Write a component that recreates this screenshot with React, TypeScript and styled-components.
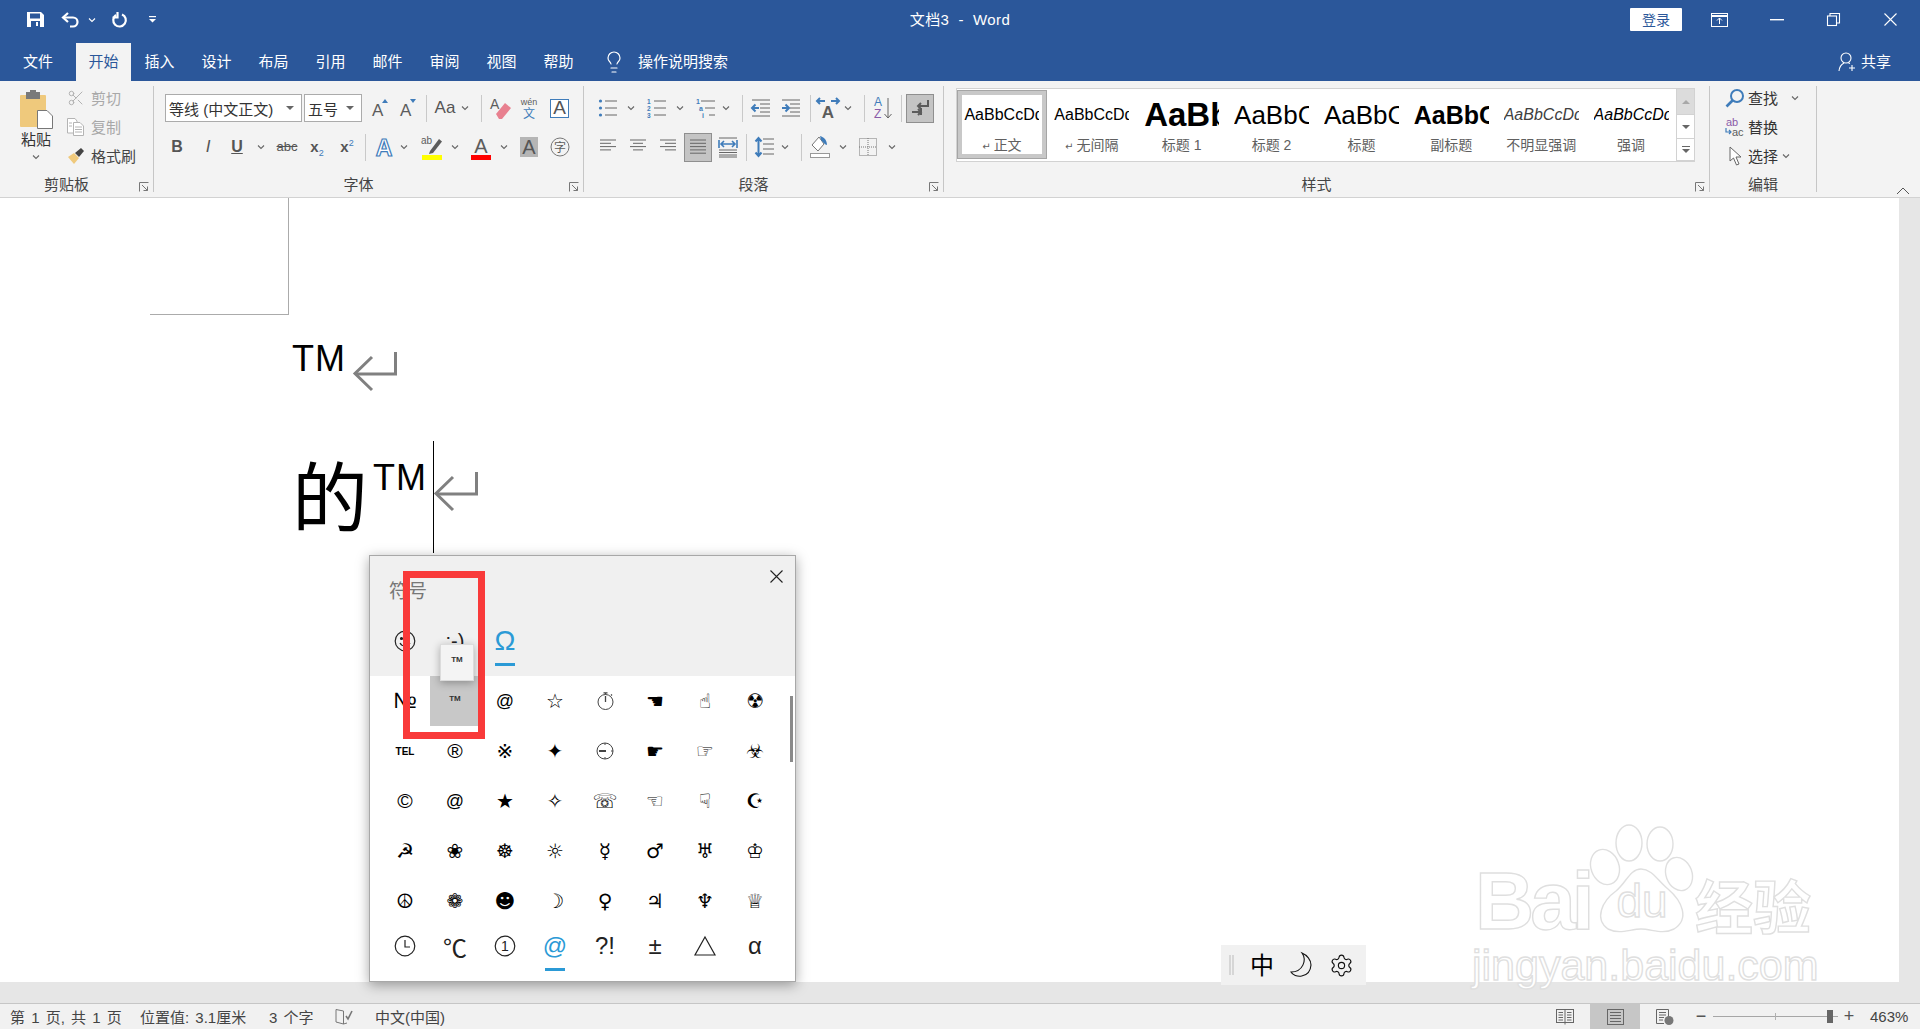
import React from 'react';
import styled, { createGlobalStyle } from 'styled-components';
import { Lightbulb, Scissors, Settings } from 'lucide-react';

const GlobalStyle = createGlobalStyle`
    html, body {
        margin: 0;
        padding: 0;
        overflow: hidden;
        background: #fff;
        font-family: "Liberation Sans", "Noto Sans CJK SC", sans-serif;
    }
    * { box-sizing: border-box; }
    svg { overflow: visible; }
`;

const GRAY = '#5c5c5c';
const BLUE = '#3f7cba';

const Chev = ({ color = '#666' }: { color?: string }) => (
    <svg width="8" height="6" viewBox="0 0 8 6"><path d="M1 1.5 L4 4.5 L7 1.5" fill="none" stroke={color} strokeWidth="1.1" /></svg>
);
const Launcher = () => (
    <svg width="10" height="10" viewBox="0 0 10 10" fill="none" stroke="#777" strokeWidth="1">
        <path d="M.5 9.5 V.5 H9.5" /><path d="M3 3 L8.5 8.5 M8.5 4.5 V8.5 H4.5" />
    </svg>
);
const SaveIcon = () => (
    <svg width="17" height="15" viewBox="0 0 17 15">
        <path d="M0 0 H14 L17 3 V15 H0 Z" fill="#fff" />
        <rect x="3" y="1.5" width="10" height="5" fill="#2b579a" />
        <rect x="4" y="9" width="9" height="6" fill="#2b579a" />
        <rect x="9" y="10" width="2" height="4" fill="#fff" />
    </svg>
);
const UndoIcon = () => (
    <svg width="19" height="16" viewBox="0 0 19 16" fill="none" stroke="#fff" strokeWidth="2.2">
        <path d="M7 1 L2 5.5 L7 10" /><path d="M2 5.5 H12 a4.5 4.5 0 0 1 0 9 H9" />
    </svg>
);
const RedoIcon = () => (
    <svg width="17" height="16" viewBox="0 0 17 16" fill="none" stroke="#fff" strokeWidth="2.2">
        <path d="M6 3 A6.3 6.3 0 1 0 12 2.4" /><path d="M7.5 0 V5.5 H2.5" />
    </svg>
);
const QatMore = () => (
    <svg width="7" height="7" viewBox="0 0 7 7" fill="#fff"><rect y="0" width="7" height="1.2" /><path d="M0 3 H7 L3.5 6.5 Z" /></svg>
);
const RibbonDisplay = () => (
    <svg width="17" height="14" viewBox="0 0 17 14" fill="none" stroke="#fff"><rect x=".5" y=".5" width="16" height="13" /><path d="M.5 3 H16.5" strokeWidth="2" /><path d="M8.5 11 V5 M6 7.5 L8.5 5 L11 7.5" /></svg>
);
const MinIcon = () => <svg width="14" height="2" viewBox="0 0 14 2"><rect width="14" height="1.4" fill="#fff" /></svg>;
const RestoreIcon = () => (
    <svg width="13" height="13" viewBox="0 0 13 13" fill="none" stroke="#fff" strokeWidth="1.1"><rect x=".5" y="3" width="9" height="9.5" /><path d="M3 3 V.5 H12.5 V10 H9.5" /></svg>
);
const CloseIcon = ({ color = '#fff', size = 13 }: { color?: string; size?: number }) => (
    <svg width={size} height={size} viewBox="0 0 13 13" stroke={color} strokeWidth="1.1"><path d="M.5 .5 L12.5 12.5 M12.5 .5 L.5 12.5" /></svg>
);
const UserPlus = () => (
    <svg width="18" height="20" viewBox="0 0 18 20" fill="none" stroke="#fff" strokeWidth="1.1"><circle cx="8" cy="6" r="5" /><path d="M1 19 C1.5 14 4 12 6 11 M10.5 11 L12 11.6" /><path d="M14 13 V19 M11 16 H17" /></svg>
);
const PasteIcon = () => (
    <svg width="35" height="39" viewBox="0 0 35 39">
        <rect x="1" y="5" width="26" height="32" rx="1" fill="#efc97c" />
        <rect x="7" y="2" width="14" height="7" fill="#7a7a7a" />
        <rect x="11" y="0" width="6" height="4" fill="#7a7a7a" />
        <path d="M18.5 20.5 H28 L33.5 26 V38.5 H18.5 Z" fill="#fff" stroke="#777" />
    </svg>
);
const CopyIcon = () => (
    <svg width="17" height="18" viewBox="0 0 17 18" fill="#fff" stroke="#b4b4b4"><path d="M.5 .5 H8 L10 3 V15 H.5 Z" /><path d="M6.5 4.5 H13 L16.5 8 V17.5 H6.5 Z" /><path d="M8 9 H15 M8 11.5 H15 M8 14 H15 M2 5 H5 M2 8 H5" /></svg>
);
const BrushIcon = () => (
    <svg width="18" height="18" viewBox="0 0 18 18"><path d="M1 10 L7 6 L12 11 L7 17 C5 15 3 12 1 10 Z" fill="#efc97c" /><path d="M8 6 L14 1 L17 4 L12 10 Z" fill="#444" /></svg>
);
const SizeA = ({ up }: { up: boolean }) => (
    <svg width="20" height="20" viewBox="0 0 20 20">
        <text x="2" y="18" fontFamily="Liberation Sans" fontSize="17" fill={GRAY}>A</text>
        <path d={up ? 'M12 5 L15 1 L18 5 Z' : 'M12 1 H18 L15 5 Z'} fill={BLUE} />
    </svg>
);
const EraserIcon = () => (
    <svg width="22" height="24" viewBox="0 0 22 24">
        <text x="0" y="13" fontFamily="Liberation Sans" fontSize="14" fill={GRAY}>A</text>
        <path d="M6 18 L15 7 L21 12 L12 23 H9 Z" fill="#e8808f" />
    </svg>
);
const WenIcon = () => (
    <svg width="22" height="24" viewBox="0 0 22 24">
        <text x="11" y="9" textAnchor="middle" fontFamily="Liberation Sans" fontSize="9" fill={GRAY}>wén</text>
        <text x="11" y="22" textAnchor="middle" fontFamily="Noto Sans CJK SC" fontSize="12" fill={BLUE}>文</text>
    </svg>
);
const EffectA = () => (
    <svg width="20" height="22" viewBox="0 0 20 22">
        <text x="10" y="20" textAnchor="middle" fontFamily="Liberation Sans" fontWeight="700" fontSize="23" fill="#fff" stroke={BLUE} strokeWidth="1.2">A</text>
    </svg>
);
const HighlightIcon = () => (
    <svg width="22" height="25" viewBox="0 0 22 25">
        <text x="0" y="9" fontFamily="Liberation Sans" fontSize="10" fill={GRAY}>ab</text>
        <path d="M9 16 L18 4 L21 6.5 L12 18 L8 19 Z" fill={GRAY} />
        <rect x="1" y="20" width="20" height="5" fill="#ffff00" />
    </svg>
);
const RedA = () => (
    <svg width="20" height="25" viewBox="0 0 20 25">
        <text x="10" y="18" textAnchor="middle" fontFamily="Liberation Sans" fontSize="20" fill={GRAY}>A</text>
        <rect x="0" y="20" width="20" height="5" fill="#f00" />
    </svg>
);
const PhoneticCircle = () => (
    <svg width="20" height="20" viewBox="0 0 20 20">
        <circle cx="10" cy="10" r="9" fill="none" stroke="#777" />
        <text x="10" y="14.5" textAnchor="middle" fontFamily="Noto Sans CJK SC" fontSize="12" fill={GRAY}>字</text>
    </svg>
);
const Lines = ({ rows }: { rows: [number, number][] }) => (
    <svg width="20" height="18" viewBox="0 0 20 18" stroke="#666">
        {rows.map(([a, b], i) => <path key={i} d={`M${a} ${2 + i * 3.3} H${b}`} />)}
    </svg>
);
const BulletList = ({ kind }: { kind: 'dot' | 'num' | 'multi' }) => (
    <svg width="20" height="20" viewBox="0 0 20 20">
        {kind === 'dot' && [3, 10, 17].map((y) => <circle key={y} cx="2.5" cy={y} r="1.6" fill={BLUE} />)}
        {kind === 'num' && ['1', '2', '3'].map((t, i) => <text key={t} x="0" y={5.5 + i * 7} fontSize="6.5" fontWeight="700" fontFamily="Liberation Sans" fill={BLUE}>{t}</text>)}
        {kind === 'multi' && ['1', 'a', 'i'].map((t, i) => <text key={t} x={i * 3} y={5.5 + i * 7} fontSize="7" fontWeight="700" fontFamily="Liberation Sans" fill={BLUE}>{t}</text>)}
        {[3, 10, 17].map((y, i) => <path key={y} d={`M${kind === 'multi' ? 5 + i * 4 : 7} ${y} H19`} stroke="#666" />)}
    </svg>
);
const IndentIcon = ({ dir }: { dir: 'in' | 'out' }) => (
    <svg width="20" height="20" viewBox="0 0 20 20" stroke="#666">
        {[2, 6, 10, 14, 18].map((y) => <path key={y} d={`M${y === 2 || y === 18 ? 1 : 9} ${y} H19`} />)}
        <path d={dir === 'out' ? 'M8 10 H1 M4.5 6.5 L1 10 L4.5 13.5' : 'M1 10 H8 M4.5 6.5 L8 10 L4.5 13.5'} stroke={BLUE} strokeWidth="2" fill="none" />
    </svg>
);
const TongueIcon = () => (
    <svg width="24" height="22" viewBox="0 0 24 22">
        <text x="12" y="21" textAnchor="middle" fontFamily="Liberation Sans" fontWeight="700" fontSize="17" fill={GRAY}>A</text>
        <path d="M1 4 H9 M4 1 L1 4 L4 7 M23 4 H15 M20 1 L23 4 L20 7" fill="none" stroke={BLUE} strokeWidth="2" />
    </svg>
);
const SortIcon = () => (
    <svg width="20" height="24" viewBox="0 0 20 24">
        <text x="0" y="10" fontFamily="Liberation Sans" fontSize="12" fill={BLUE}>A</text>
        <text x="0" y="22" fontFamily="Liberation Sans" fontSize="12" fill="#8a5aa8">Z</text>
        <path d="M14 2 V22 M10.5 18 L14 22 L17.5 18" fill="none" stroke="#666" />
    </svg>
);
const PilcrowIcon = () => (
    <svg width="20" height="20" viewBox="0 0 20 20" fill="none" strokeWidth="2">
        <path d="M18 2 V8 H8 M11 5 L8 8 L11 11" stroke={GRAY} />
        <path d="M2 14 H11 M8 11 L11 14 L8 17 M11 10 V17" stroke={GRAY} />
    </svg>
);
const DistributedIcon = () => (
    <svg width="20" height="22" viewBox="0 0 20 22" stroke="#666">
        {[2, 14, 16.5, 19, 21].map((y) => <path key={y} d={`M1 ${y} H19`} />)}
        <path d="M3 8 H17 M6 5 L3 8 L6 11 M14 5 L17 8 L14 11 M1 4 V12 M19 4 V12" fill="none" stroke={BLUE} strokeWidth="1.6" />
    </svg>
);
const LineSpacingIcon = () => (
    <svg width="20" height="22" viewBox="0 0 20 22">
        {[3, 8, 13, 18].map((y) => <path key={y} d={`M8 ${y} H19`} stroke="#666" />)}
        <path d="M3.5 2 V20 M.5 5.5 L3.5 2 L6.5 5.5 M.5 16.5 L3.5 20 L6.5 16.5" fill="none" stroke={BLUE} strokeWidth="2" />
    </svg>
);
const FillIcon = () => (
    <svg width="20" height="24" viewBox="0 0 20 24">
        <path d="M9 2 L2 10 L8 16 L14 9 Z" fill="#fff" stroke="#777" />
        <path d="M10 1 C14 2 17 5 17 10 C15 10 13 7 11 5 Z" fill={BLUE} />
        <rect x=".5" y="18.5" width="19" height="4" fill="#fff" stroke="#999" />
    </svg>
);
const BorderIcon = () => (
    <svg width="18" height="18" viewBox="0 0 18 18" fill="none" stroke="#777" strokeDasharray="1 1"><rect x=".5" y=".5" width="17" height="17" /><path d="M9 0 V18 M0 9 H18" /></svg>
);
const SearchIcon = () => (
    <svg width="20" height="20" viewBox="0 0 20 20" fill="none" stroke={BLUE} strokeWidth="2"><circle cx="12" cy="8" r="6" /><path d="M7.5 12.5 L1.5 18.5" strokeWidth="2.6" /></svg>
);
const ReplaceIcon = () => (
    <svg width="22" height="20" viewBox="0 0 22 20">
        <text x="2" y="9" fontFamily="Liberation Sans" fontSize="11" fill="#8a5aa8">ab</text>
        <text x="8" y="19" fontFamily="Liberation Sans" fontSize="11" fill={GRAY}>ac</text>
        <path d="M2 11 V15 H7 M5 13 L7 15 L5 17" fill="none" stroke={BLUE} strokeWidth="1.2" />
    </svg>
);
const CursorIcon = () => (
    <svg width="13" height="20" viewBox="0 0 13 20"><path d="M1 1 V15 L4.5 12 L7.5 19 L10 18 L7 11 L12 11 Z" fill="#fff" stroke="#666" /></svg>
);
const CheckBook = () => (
    <svg width="18" height="16" viewBox="0 0 18 16" fill="none" stroke="#777"><path d="M8.5 2 L1 .5 V13 L8.5 15 M8.5 2 V15 M8.5 15 L12 14" /><path d="M11 7 L13 10 L17 2" strokeWidth="1.6" /></svg>
);
const ReadIcon = () => (
    <svg width="18" height="16" viewBox="0 0 18 16" fill="none" stroke="#666"><rect x=".5" y=".5" width="17" height="13" /><path d="M9 .5 V15.5 M2.5 3.5 H7 M2.5 6 H7 M2.5 8.5 H7 M2.5 11 H7 M11 3.5 H15.5 M11 6 H15.5 M11 8.5 H15.5 M11 11 H15.5" /></svg>
);
const PrintIcon = () => (
    <svg width="17" height="16" viewBox="0 0 17 16" fill="none" stroke="#666"><rect x=".5" y=".5" width="16" height="15" /><path d="M3 3.5 H14 M3 6.5 H14 M3 9.5 H14 M3 12.5 H14" /></svg>
);
const WebIcon = () => (
    <svg width="18" height="16" viewBox="0 0 18 16"><path d="M.5 .5 H12.5 V8 M.5 .5 V14.5 H8" fill="none" stroke="#666" /><path d="M3 3.5 H10 M3 6 H10 M3 8.5 H8 M3 11 H7" stroke="#666" /><circle cx="13" cy="11.5" r="4.5" fill="#777" /></svg>
);
const Grip = () => (
    <svg width="6" height="20" viewBox="0 0 6 20" stroke="#bbb"><path d="M1 0 V20 M4 0 V20" /></svg>
);
const MoonIcon = () => (
    <svg width="24" height="26" viewBox="0 0 24 26"><path d="M13 1 C18 8 14 20 2 20 C5 26 21 27 22 13 C22 8 18 3 13 1 Z" fill="none" stroke="#111" strokeWidth="1.1" /></svg>
);
const ReturnMark = () => (
    <svg width="44" height="39" viewBox="0 0 44 39" fill="none" stroke="#808080" strokeWidth="3">
        <path d="M42.5 0 V22 H3" /><path d="M19 5 L2 21.5 L19 38" />
    </svg>
);
const FaceTab = () => (
    <svg width="22" height="22" viewBox="0 0 22 22" fill="none" stroke="#222" strokeWidth="1.2">
        <circle cx="11" cy="11" r="9.8" /><circle cx="7.5" cy="8.5" r="1" fill="#222" /><circle cx="14.5" cy="8.5" r="1" fill="#222" /><path d="M6 13 C8 17 14 17 16 13" />
    </svg>
);
const ClockIcon = () => (
    <svg width="22" height="22" viewBox="0 0 22 22" fill="none" stroke="#222" strokeWidth="1.2"><circle cx="11" cy="11" r="9.8" /><path d="M11 5 V12 H16" /></svg>
);
const OneIcon = () => (
    <svg width="22" height="22" viewBox="0 0 22 22"><circle cx="11" cy="11" r="9.8" fill="none" stroke="#222" strokeWidth="1.2" /><text x="11" y="16" textAnchor="middle" fontSize="14" fontFamily="Liberation Sans" fill="#222">1</text></svg>
);
const TriangleIcon = () => (
    <svg width="22" height="20" viewBox="0 0 22 20" fill="none" stroke="#222" strokeWidth="1.2"><path d="M11 1 L21 19 H1 Z" /></svg>
);
const StopwatchIcon = () => (
    <svg width="17" height="18" viewBox="0 0 17 18" fill="none" stroke="#444"><circle cx="8.5" cy="10" r="7.5" /><path d="M8.5 10 V4 M6.5 .8 H10.5 M8.5 .8 V2.5 M14 2.5 L15 3.5" strokeWidth="1.3" /></svg>
);
const TimerIcon = () => (
    <svg width="18" height="18" viewBox="0 0 18 18" fill="none" stroke="#444"><circle cx="9" cy="9" r="8" /><path d="M3 9 H10" strokeWidth="2" /><path d="M9 1 V3 M9 15 V17 M15 9 H17" /></svg>
);

const Window = styled.div`
    position: relative;
    width: 1920px;
    height: 1029px;
    display: flex;
    flex-direction: column;
    overflow: hidden;
    color: #444;
`;
const TitleBar = styled.div`
    height: 43px;
    padding-bottom: 4px;
    background: #2b579a;
    display: grid;
    grid-template-columns: 1fr auto 1fr;
    align-items: center;
    color: #fff;
`;
const Qat = styled.div`
    display: flex;
    align-items: center;
`;
const WinTitle = styled.div`
    padding-bottom: 3px;
    font-size: 15px;
    letter-spacing: 0.4px;
    white-space: pre;
`;
const WinControls = styled.div`
    display: flex;
    align-items: center;
    justify-content: flex-end;
    padding-right: 1px;
`;
const LoginButton = styled.div`
    width: 52px;
    height: 23px;
    padding-bottom: 2px;
    margin-right: 9px;
    background: #fff;
    border-radius: 1px;
    color: #2b579a;
    font-size: 14px;
    display: flex;
    align-items: center;
    justify-content: center;
`;
const WinButton = styled.div`
    width: 57px;
    display: flex;
    justify-content: center;
    align-items: center;
`;
const TabBar = styled.div`
    height: 38px;
    background: #2b579a;
    display: flex;
    align-items: stretch;
    color: #fff;
    font-size: 15px;
`;
const Tab = styled.div<{ $w?: number; $active?: boolean }>`
    width: ${(p) => p.$w ?? 57}px;
    padding-bottom: 3px;
    display: flex;
    align-items: center;
    justify-content: center;
    background: ${(p) => (p.$active ? '#f3f3f3' : 'transparent')};
    color: ${(p) => (p.$active ? '#2b579a' : '#fff')};
`;
const TellMe = styled.div`
    margin-left: 5px;
    display: flex;
    align-items: center;
    gap: 2px;
`;
const TellText = styled.span`
    padding-bottom: 3px;
`;
const BulbSlot = styled.span`
    width: 44px;
    display: flex;
    justify-content: center;
`;
const Share = styled.div`
    margin-left: auto;
    padding-right: 29px;
    display: flex;
    align-items: center;
    gap: 5px;
`;
const Ribbon = styled.div`
    height: 117px;
    padding-top: 5px;
    background: #f3f3f3;
    border-bottom: 1px solid #d2d2d2;
    display: flex;
    align-items: flex-start;
    font-size: 15px;
`;
const Group = styled.div<{ $w: number }>`
    position: relative;
    width: ${(p) => p.$w}px;
    height: 106px;
    border-right: 1px solid #c6c6c6;
    display: flex;
    flex-direction: column;
`;
const GroupBody = styled.div`
    flex: 1;
    min-height: 0;
`;
const GroupLabel = styled.div<{ $plain?: boolean }>`
    height: 14px;
    padding-right: ${(p) => (p.$plain ? 0 : 20)}px;
    line-height: 14px;
    font-size: 15px;
    text-align: center;
    color: #444;
`;
const LauncherSpot = styled.span`
    position: absolute;
    right: 4px;
    bottom: 0;
    display: flex;
`;
const ClipBody = styled(GroupBody)`
    display: flex;
`;
const PasteColumn = styled.div`
    width: 67px;
    padding: 4px 0 0 5px;
    display: flex;
    flex-direction: column;
    align-items: center;
    color: #333;
`;
const PasteText = styled.div`
    margin-top: 1px;
    line-height: 20px;
`;
const PasteChev = styled.div`
    margin-top: 4px;
    line-height: 0;
`;
const ActionList = styled.div`
    margin-top: -2px;
    display: flex;
    flex-direction: column;
    gap: 2px;
`;
const Action = styled.div<{ $off?: boolean }>`
    height: 27px;
    display: flex;
    align-items: center;
    color: ${(p) => (p.$off ? '#a8a8a8' : '#444')};
`;
const ActionIcon = styled.span`
    width: 24px;
    display: flex;
`;
const ToolRows = styled(GroupBody)`
    padding-top: 8px;
    display: flex;
    flex-direction: column;
    gap: 11px;
`;
const ToolRow = styled.div`
    height: 28px;
    display: flex;
    align-items: center;
`;
const Slot = styled.span<{ $w?: number; $ml?: number }>`
    flex: none;
    width: ${(p) => p.$w ?? 20}px;
    margin-left: ${(p) => p.$ml ?? 0}px;
    display: flex;
    justify-content: center;
    align-items: center;
    color: #555;
`;
const Glyph = styled.span<{ $size?: number; $bold?: boolean; $italic?: boolean; $strike?: boolean; $u?: boolean }>`
    font-family: "Liberation Sans", sans-serif;
    font-size: ${(p) => p.$size ?? 16}px;
    font-weight: ${(p) => (p.$bold ? 700 : 400)};
    font-style: ${(p) => (p.$italic ? 'italic' : 'normal')};
    text-decoration: ${(p) => (p.$strike ? 'line-through' : p.$u ? 'underline' : 'none')};
    line-height: 20px;
    white-space: nowrap;
`;
const SubMark = styled.sub`
    font-size: 9px;
    color: ${BLUE};
    font-weight: 400;
    line-height: 0;
`;
const SupMark = styled.sup`
    font-size: 9px;
    color: ${BLUE};
    font-weight: 400;
    line-height: 0;
`;
const VSep = styled.span<{ $ml: number }>`
    flex: none;
    width: 1px;
    height: 27px;
    margin-left: ${(p) => p.$ml}px;
    background: #c9c9c9;
`;
const Select = styled.div<{ $w: number; $ml?: number }>`
    flex: none;
    width: ${(p) => p.$w}px;
    height: 28px;
    margin-left: ${(p) => p.$ml ?? 0}px;
    padding: 0 2px 0 3px;
    background: #fff;
    border: 1px solid #ababab;
    display: flex;
    align-items: center;
    justify-content: space-between;
    color: #333;
    font-size: 15px;
    white-space: nowrap;
`;
const SelectArrow = styled.span`
    width: 0;
    height: 0;
    margin-right: 5px;
    border-left: 4px solid transparent;
    border-right: 4px solid transparent;
    border-top: 4px solid #666;
`;
const BoxedA = styled.span`
    width: 19px;
    height: 19px;
    background: #fff;
    border: 1px solid #3f7cba;
    display: flex;
    align-items: center;
    justify-content: center;
    font-size: 19px;
    color: #555;
    font-family: "Liberation Sans", sans-serif;
`;
const ShadeA = styled(BoxedA)`
    height: 20px;
    width: 18px;
    background: #b5b5b5;
    border: none;
    font-size: 20px;
`;
const Toggled = styled.span`
    flex: none;
    width: 28px;
    height: 29px;
    background: #c4c4c4;
    border: 1px solid #8f8f8f;
    display: flex;
    align-items: center;
    justify-content: center;
`;
const ToggledAt = styled(Toggled)<{ $ml: number }>`
    margin-left: ${(p) => p.$ml}px;
`;
const Gallery = styled.div`
    width: 739px;
    height: 74px;
    margin: 2px 0 0 12px;
    background: #fff;
    border: 1px solid #d2d2d2;
    display: flex;
`;
const StyleItem = styled.div<{ $active?: boolean }>`
    width: 90px;
    height: 69px;
    margin-top: 1px;
    box-shadow: ${(p) => (p.$active ? 'inset 0 0 0 1px #a5a5a5, inset 0 0 0 5px #c8c8c8' : 'none')};
    display: flex;
    flex-direction: column;
    align-items: center;
`;
const StylePreview = styled.div<{ $size?: number; $bold?: boolean; $italic?: boolean; $color?: string }>`
    width: 75px;
    height: 50px;
    overflow: hidden;
    white-space: nowrap;
    font-family: "Liberation Sans", sans-serif;
    font-size: ${(p) => p.$size ?? 16}px;
    font-weight: ${(p) => (p.$bold ? 700 : 400)};
    font-style: ${(p) => (p.$italic ? 'italic' : 'normal')};
    color: ${(p) => p.$color ?? '#000'};
    line-height: 50px;
`;
const StyleName = styled.div`
    margin-top: -4px;
    line-height: 18px;
    font-size: 14px;
    color: #606060;
    white-space: nowrap;
`;
const ReturnGlyph = styled.span`
    font-size: 10px;
    margin-right: 3px;
    font-family: "DejaVu Sans", sans-serif;
`;
const GalleryScroll = styled.div`
    margin-left: auto;
    width: 18px;
    display: flex;
    flex-direction: column;
    border-left: 1px solid #d2d2d2;
`;
const ScrollBtn = styled.div<{ $h: number; $off?: boolean }>`
    height: ${(p) => p.$h}px;
    background: ${(p) => (p.$off ? '#dcdcdc' : '#fff')};
    border-bottom: 1px solid #d2d2d2;
    display: flex;
    flex-direction: column;
    gap: 2px;
    align-items: center;
    justify-content: center;
`;
const Tri = styled.span<{ $up?: boolean; $c?: string }>`
    width: 0;
    height: 0;
    border-left: 4px solid transparent;
    border-right: 4px solid transparent;
    ${(p) => (p.$up ? `border-bottom: 4px solid ${p.$c ?? '#666'};` : `border-top: 4px solid ${p.$c ?? '#666'};`)}
`;
const TriBar = styled.span`
    width: 8px;
    height: 1px;
    background: #666;
`;
const EditBody = styled(GroupBody)`
    margin-top: -2px;
    display: flex;
    flex-direction: column;
    gap: 2px;
    padding-left: 14px;
`;
const EditRow = styled.div`
    height: 27px;
    display: flex;
    align-items: center;
    color: #333;
`;
const EditIcon = styled.span`
    width: 24px;
    padding-right: 2px;
    display: flex;
    justify-content: center;
`;
const EditChev = styled.span<{ $ml: number }>`
    margin-left: ${(p) => p.$ml}px;
    display: flex;
`;
const Collapse = styled.span`
    flex: none;
    margin: 101px 0 0 79px;
    line-height: 0;
`;
const DocArea = styled.div`
    height: 784px;
    display: flex;
`;
const Page = styled.div`
    flex: 1;
    background: #fff;
    font-family: "Liberation Sans", sans-serif;
    color: #000;
`;
const Strip = styled.div`
    width: 21px;
    background: #e6e6e6;
`;
const CropMark = styled.div`
    width: 139px;
    height: 117px;
    margin-left: 150px;
    border-right: 1px solid #ababab;
    border-bottom: 1px solid #ababab;
`;
const Para = styled.div<{ $mt: number }>`
    margin: ${(p) => p.$mt}px 0 0 292px;
    display: flex;
    align-items: flex-start;
`;
const Trade = styled.span<{ $mt?: number; $ml?: number }>`
    font-size: 36px;
    line-height: 36px;
    letter-spacing: 1px;
    margin: ${(p) => p.$mt ?? 0}px 0 0 ${(p) => p.$ml ?? 0}px;
`;
const BigChar = styled.span`
    width: 76px;
    height: 76px;
    font-size: 76px;
    line-height: 76px;
    margin-top: -1px;
    font-family: "Noto Sans CJK SC", sans-serif;
`;
const MarkSpot = styled.span<{ $mt: number; $ml?: number }>`
    display: flex;
    margin: ${(p) => p.$mt}px 0 0 ${(p) => p.$ml ?? 0}px;
`;
const Caret = styled.span`
    flex: none;
    width: 1px;
    height: 112px;
    margin: -15px 0 0 6px;
    background: #000;
`;
const Gutter = styled.div`
    height: 21px;
    background: #e6e6e6;
`;
const StatusBar = styled.div`
    height: 26px;
    background: #f1f1f1;
    border-top: 1px solid #c6c6c6;
    padding-left: 10px;
    display: flex;
    align-items: stretch;
    font-size: 15px;
    word-spacing: 2px;
    color: #444;
`;
const StatusItem = styled.div<{ $w: number }>`
    width: ${(p) => p.$w}px;
    display: flex;
    align-items: center;
    white-space: nowrap;
`;
const StatusRight = styled.div`
    margin-left: auto;
    padding-right: 11px;
    display: flex;
    align-items: stretch;
`;
const ViewBtn = styled.div<{ $active?: boolean }>`
    width: 50px;
    background: ${(p) => (p.$active ? '#c6c6c6' : 'transparent')};
    display: flex;
    align-items: center;
    justify-content: center;
`;
const ZoomSign = styled.div`
    width: 22px;
    display: flex;
    align-items: center;
    justify-content: center;
    font-size: 18px;
    color: #555;
`;
const Slider = styled.div`
    position: relative;
    width: 125px;
    margin-left: 1px;
    display: flex;
    align-items: center;
`;
const SliderTrack = styled.div`
    width: 100%;
    height: 1px;
    background: #a6a6a6;
`;
const SliderTick = styled.div`
    position: absolute;
    left: 62px;
    top: 9px;
    width: 1px;
    height: 7px;
    background: #b0b0b0;
`;
const SliderThumb = styled.div`
    position: absolute;
    left: 114px;
    top: 6px;
    width: 6px;
    height: 13px;
    background: #666;
`;
const ZoomPct = styled.div`
    width: 39px;
    margin-left: 10px;
    display: flex;
    align-items: center;
    white-space: nowrap;
`;
const Popup = styled.div`
    position: absolute;
    left: 369px;
    top: 555px;
    width: 427px;
    height: 427px;
    background: #fff;
    border: 1px solid #a8a8a8;
    box-shadow: 0 3px 12px rgba(0, 0, 0, 0.35);
    font-family: "Liberation Sans", "Noto Sans CJK SC", sans-serif;
    color: #111;
`;
const PopupHead = styled.div`
    height: 120px;
    background: #f0f0f0;
`;
const PopupTitleRow = styled.div`
    padding: 14px 12px 0 19px;
    display: flex;
    justify-content: space-between;
    align-items: flex-start;
`;
const PopupTitle = styled.div`
    margin-top: 10px;
    font-size: 19px;
    line-height: 24px;
    color: #777;
`;
const PanelTabs = styled.div`
    margin-top: 19px;
    padding-left: 10px;
    display: flex;
`;
const PanelTab = styled.div<{ $active?: boolean }>`
    width: 50px;
    display: flex;
    flex-direction: column;
    align-items: center;
    color: ${(p) => (p.$active ? '#2b9ad6' : '#222')};
    &::after {
        content: '';
        width: 20px;
        height: 3px;
        margin-top: 4px;
        background: ${(p) => (p.$active ? '#2b9ad6' : 'transparent')};
    }
`;
const PanelGlyph = styled.div<{ $size?: number }>`
    height: 36px;
    display: flex;
    align-items: center;
    justify-content: center;
    font-size: ${(p) => p.$size ?? 24}px;
    font-weight: 400;
    white-space: nowrap;
`;
const SymbolGrid = styled.div`
    padding-left: 10px;
    display: grid;
    grid-template-columns: repeat(8, 50px);
    grid-auto-rows: 50px;
`;
const SymbolCell = styled.div<{ $size?: number; $hl?: boolean; $thin?: boolean; $bold?: boolean }>`
    display: flex;
    align-items: center;
    justify-content: center;
    font-family: ${(p) => (p.$thin ? '"Liberation Sans"' : '"DejaVu Sans"')}, "Noto Sans CJK SC", sans-serif;
    font-size: ${(p) => p.$size ?? 20}px;
    font-weight: ${(p) => (p.$bold ? 700 : 400)};
    color: #000;
    ${(p) => (p.$hl ? 'padding-bottom: 6px; background: #c8c8c8;' : '')}
`;
const BottomTabs = styled(PanelTabs)`
    margin-top: 2px;
`;
const ListScroll = styled.div`
    position: absolute;
    left: 420px;
    top: 140px;
    width: 3px;
    height: 66px;
    background: #8a8a8a;
`;
const RedFrame = styled.div`
    position: absolute;
    left: 33px;
    top: 15px;
    width: 82px;
    height: 168px;
    border: 7px solid #f93a3a;
`;
const KeyTip = styled.div`
    position: absolute;
    left: 70px;
    top: 88px;
    width: 34px;
    height: 37px;
    background: #f4f4f4;
    border: 1px solid #dcdcdc;
    box-shadow: 0 2px 8px rgba(0, 0, 0, 0.3);
    display: flex;
    justify-content: center;
    align-items: center;
    padding-bottom: 7px;
`;
const TinyTm = styled.span`
    font-family: "Liberation Sans", sans-serif;
    font-size: 8px;
    font-weight: 700;
    color: #333;
`;
const ImeBar = styled.div`
    position: absolute;
    left: 1221px;
    top: 945px;
    width: 145px;
    height: 40px;
    padding-left: 8px;
    background: #f1f1f1;
    display: flex;
    align-items: center;
    color: #000;
`;
const ImeChar = styled.span`
    width: 38px;
    margin-left: 8px;
    padding-bottom: 3px;
    text-align: center;
    font-size: 24px;
`;
const ImeIcon = styled.span`
    width: 40px;
    display: flex;
    justify-content: center;
`;
const Watermark = styled.div`
    position: absolute;
    left: 1472px;
    top: 823px;
    pointer-events: none;
`;
const MarkRow = styled.div`
    height: 112px;
    display: flex;
    align-items: flex-end;
`;
const outline = `
    color: #fff;
    -webkit-text-stroke: 1.4px #dfdfdf;
    white-space: nowrap;
`;
const MarkBai = styled.span`
    ${outline}
    margin-left: 3px;
    font-family: "Liberation Sans", sans-serif;
    font-weight: 700;
    font-size: 82px;
    letter-spacing: -4px;
    line-height: 82px;
    width: 115px;
    margin-bottom: -7px;
`;
const MarkCn = styled.span`
    ${outline}
    font-family: "Noto Sans CJK SC", sans-serif;
    font-weight: 700;
    font-size: 58px;
    line-height: 62px;
`;
const MarkUrl = styled.div`
    ${outline}
    margin-top: 5px;
    font-family: "Liberation Sans", sans-serif;
    font-size: 43px;
    line-height: 50px;
`;

const symbols: React.ReactNode[] = [
    '№', '', '@', '☆', <StopwatchIcon key="sw" />, '☚', '☝', '☢',
    'TEL', '®', '※', '✦', <TimerIcon key="tm" />, '☛', '☞', '☣',
    '©', '@', '★', '✧', '☏', '☜', '☟', '☪',
    '☭', '❀', '☸', '☼', '☿', '♂', '♅', '♔',
    '☮', '❁', '☻', '☽', '♀', '♃', '♆', '♕',
];

const thinSet: React.ReactNode[] = ['№', 'TEL', '®', '©', '@'];

const sizeFor = (s: React.ReactNode) => {
    if (s === '№') return 22;
    if (s === 'TEL') return 10;
    if (s === '®' || s === '©') return 21;
    if (s === '@') return 18;
    return 20;
};

const App = () => {
    return (
        <Window>
            <GlobalStyle />
            <TitleBar>
                <Qat>
                    <Slot $w={17} $ml={27}><SaveIcon /></Slot>
                    <Slot $w={19} $ml={17}><UndoIcon /></Slot>
                    <Slot $w={8} $ml={8}><Chev color="#fff" /></Slot>
                    <Slot $w={17} $ml={14}><RedoIcon /></Slot>
                    <Slot $w={7} $ml={22}><QatMore /></Slot>
                </Qat>
                <WinTitle>文档3  -  Word</WinTitle>
                <WinControls>
                    <LoginButton>登录</LoginButton>
                    <WinButton><RibbonDisplay /></WinButton>
                    <WinButton><MinIcon /></WinButton>
                    <WinButton><RestoreIcon /></WinButton>
                    <WinButton><CloseIcon /></WinButton>
                </WinControls>
            </TitleBar>
            <TabBar>
                <Tab $w={76}>文件</Tab>
                <Tab $w={55} $active>开始</Tab>
                <Tab>插入</Tab>
                <Tab>设计</Tab>
                <Tab>布局</Tab>
                <Tab>引用</Tab>
                <Tab>邮件</Tab>
                <Tab>审阅</Tab>
                <Tab>视图</Tab>
                <Tab>帮助</Tab>
                <TellMe>
                    <BulbSlot><Lightbulb size={24} strokeWidth={1.2} color="#fff" /></BulbSlot>
                    <TellText>操作说明搜索</TellText>
                </TellMe>
                <Share><UserPlus /><TellText>共享</TellText></Share>
            </TabBar>
            <Ribbon>
                <Group $w={154}>
                    <ClipBody>
                        <PasteColumn>
                            <PasteIcon />
                            <PasteText>粘贴</PasteText>
                            <PasteChev><Chev /></PasteChev>
                        </PasteColumn>
                        <ActionList>
                            <Action $off><ActionIcon><Scissors size={18} strokeWidth={1.3} color="#b0b0b0" /></ActionIcon>剪切</Action>
                            <Action $off><ActionIcon><CopyIcon /></ActionIcon>复制</Action>
                            <Action><ActionIcon><BrushIcon /></ActionIcon>格式刷</Action>
                        </ActionList>
                    </ClipBody>
                    <GroupLabel>剪贴板</GroupLabel>
                    <LauncherSpot><Launcher /></LauncherSpot>
                </Group>
                <Group $w={430}>
                    <ToolRows>
                        <ToolRow>
                            <Select $w={137} $ml={11}>等线 (中文正文)<SelectArrow /></Select>
                            <Select $w={58} $ml={2}>五号<SelectArrow /></Select>
                            <Slot $ml={8}><SizeA up /></Slot>
                            <Slot $ml={8}><SizeA up={false} /></Slot>
                            <VSep $ml={8} />
                            <Slot $w={24} $ml={6}><Glyph $size={17}>Aa</Glyph></Slot>
                            <Slot $w={10} $ml={3}><Chev /></Slot>
                            <VSep $ml={11} />
                            <Slot $w={22} $ml={8}><EraserIcon /></Slot>
                            <Slot $w={22} $ml={6}><WenIcon /></Slot>
                            <Slot $w={19} $ml={10}><BoxedA>A</BoxedA></Slot>
                        </ToolRow>
                        <ToolRow>
                            <Slot $ml={13}><Glyph $bold>B</Glyph></Slot>
                            <Slot $ml={11}><Glyph $italic $size={17}>I</Glyph></Slot>
                            <Slot $ml={9}><Glyph $u $bold>U</Glyph></Slot>
                            <Slot $w={10} $ml={9}><Chev /></Slot>
                            <Slot $w={22} $ml={10}><Glyph $strike $size={13}>abc</Glyph></Slot>
                            <Slot $ml={9}><Glyph $bold $size={15}>x<SubMark>2</SubMark></Glyph></Slot>
                            <Slot $ml={10}><Glyph $bold $size={15}>x<SupMark>2</SupMark></Glyph></Slot>
                            <VSep $ml={8} />
                            <Slot $ml={8}><EffectA /></Slot>
                            <Slot $w={10} $ml={5}><Chev /></Slot>
                            <Slot $w={22} $ml={12}><HighlightIcon /></Slot>
                            <Slot $w={10} $ml={7}><Chev /></Slot>
                            <Slot $ml={11}><RedA /></Slot>
                            <Slot $w={10} $ml={8}><Chev /></Slot>
                            <Slot $w={18} $ml={11}><ShadeA>A</ShadeA></Slot>
                            <Slot $ml={12}><PhoneticCircle /></Slot>
                        </ToolRow>
                    </ToolRows>
                    <GroupLabel>字体</GroupLabel>
                    <LauncherSpot><Launcher /></LauncherSpot>
                </Group>
                <Group $w={360}>
                    <ToolRows>
                        <ToolRow>
                            <Slot $ml={14}><BulletList kind="dot" /></Slot>
                            <Slot $w={10} $ml={8}><Chev /></Slot>
                            <Slot $ml={11}><BulletList kind="num" /></Slot>
                            <Slot $w={10} $ml={8}><Chev /></Slot>
                            <Slot $ml={11}><BulletList kind="multi" /></Slot>
                            <Slot $w={10} $ml={5}><Chev /></Slot>
                            <VSep $ml={11} />
                            <Slot $ml={8}><IndentIcon dir="out" /></Slot>
                            <Slot $ml={10}><IndentIcon dir="in" /></Slot>
                            <VSep $ml={9} />
                            <Slot $w={24} $ml={5}><TongueIcon /></Slot>
                            <Slot $w={10} $ml={3}><Chev /></Slot>
                            <VSep $ml={11} />
                            <Slot $ml={9}><SortIcon /></Slot>
                            <VSep $ml={7} />
                            <ToggledAt $ml={4}><PilcrowIcon /></ToggledAt>
                        </ToolRow>
                        <ToolRow>
                            <Slot $ml={14}><Lines rows={[[2, 18], [2, 13], [2, 18], [2, 13]]} /></Slot>
                            <Slot $ml={10}><Lines rows={[[2, 18], [5, 15], [2, 18], [5, 15]]} /></Slot>
                            <Slot $ml={10}><Lines rows={[[2, 18], [7, 18], [2, 18], [7, 18]]} /></Slot>
                            <ToggledAt $ml={6}><Lines rows={[[2, 18], [2, 18], [2, 18], [2, 18], [2, 18]]} /></ToggledAt>
                            <Slot $ml={6}><DistributedIcon /></Slot>
                            <VSep $ml={8} />
                            <Slot $ml={8}><LineSpacingIcon /></Slot>
                            <Slot $w={10} $ml={5}><Chev /></Slot>
                            <VSep $ml={11} />
                            <Slot $ml={8}><FillIcon /></Slot>
                            <Slot $w={10} $ml={8}><Chev /></Slot>
                            <Slot $ml={10}><BorderIcon /></Slot>
                            <Slot $w={10} $ml={9}><Chev /></Slot>
                        </ToolRow>
                    </ToolRows>
                    <GroupLabel>段落</GroupLabel>
                    <LauncherSpot><Launcher /></LauncherSpot>
                </Group>
                <Group $w={766}>
                    <GroupBody>
                        <Gallery>
                            <StyleItem $active>
                                <StylePreview>AaBbCcDd</StylePreview>
                                <StyleName><ReturnGlyph>↵</ReturnGlyph>正文</StyleName>
                            </StyleItem>
                            <StyleItem>
                                <StylePreview>AaBbCcDd</StylePreview>
                                <StyleName><ReturnGlyph>↵</ReturnGlyph>无间隔</StyleName>
                            </StyleItem>
                            <StyleItem>
                                <StylePreview $size={33} $bold>AaBb</StylePreview>
                                <StyleName>标题 1</StyleName>
                            </StyleItem>
                            <StyleItem>
                                <StylePreview $size={26}>AaBbC</StylePreview>
                                <StyleName>标题 2</StyleName>
                            </StyleItem>
                            <StyleItem>
                                <StylePreview $size={26}>AaBbC</StylePreview>
                                <StyleName>标题</StyleName>
                            </StyleItem>
                            <StyleItem>
                                <StylePreview $size={25} $bold>AaBbC</StylePreview>
                                <StyleName>副标题</StyleName>
                            </StyleItem>
                            <StyleItem>
                                <StylePreview $italic $color="#404040">AaBbCcDd</StylePreview>
                                <StyleName>不明显强调</StyleName>
                            </StyleItem>
                            <StyleItem>
                                <StylePreview $italic>AaBbCcDd</StylePreview>
                                <StyleName>强调</StyleName>
                            </StyleItem>
                            <GalleryScroll>
                                <ScrollBtn $h={26} $off><Tri $up $c="#a8a8a8" /></ScrollBtn>
                                <ScrollBtn $h={24}><Tri /></ScrollBtn>
                                <ScrollBtn $h={22}><TriBar /><Tri /></ScrollBtn>
                            </GalleryScroll>
                        </Gallery>
                    </GroupBody>
                    <GroupLabel>样式</GroupLabel>
                    <LauncherSpot><Launcher /></LauncherSpot>
                </Group>
                <Group $w={107}>
                    <EditBody>
                        <EditRow><EditIcon><SearchIcon /></EditIcon>查找<EditChev $ml={13}><Chev /></EditChev></EditRow>
                        <EditRow><EditIcon><ReplaceIcon /></EditIcon>替换</EditRow>
                        <EditRow><EditIcon><CursorIcon /></EditIcon>选择<EditChev $ml={4}><Chev /></EditChev></EditRow>
                    </EditBody>
                    <GroupLabel $plain>编辑</GroupLabel>
                </Group>
                <Collapse>
                    <svg width="14" height="8" viewBox="0 0 14 8" fill="none" stroke="#555"><path d="M1 7 L7 1 L13 7" /></svg>
                </Collapse>
            </Ribbon>
            <DocArea>
                <Page>
                    <CropMark />
                    <Para $mt={26}>
                        <Trade>TM</Trade>
                        <MarkSpot $mt={11} $ml={7}><ReturnMark /></MarkSpot>
                    </Para>
                    <Para $mt={65}>
                        <BigChar>的</BigChar>
                        <Trade $mt={4} $ml={5}>TM</Trade>
                        <Caret />
                        <MarkSpot $mt={16}><ReturnMark /></MarkSpot>
                    </Para>
                </Page>
                <Strip />
            </DocArea>
            <Gutter />
            <StatusBar>
                <StatusItem $w={130}>第 1 页, 共 1 页</StatusItem>
                <StatusItem $w={129}>位置值: 3.1厘米</StatusItem>
                <StatusItem $w={66}>3 个字</StatusItem>
                <StatusItem $w={40}><CheckBook /></StatusItem>
                <StatusItem $w={90}>中文(中国)</StatusItem>
                <StatusRight>
                    <ViewBtn><ReadIcon /></ViewBtn>
                    <ViewBtn $active><PrintIcon /></ViewBtn>
                    <ViewBtn><WebIcon /></ViewBtn>
                    <ZoomSign>−</ZoomSign>
                    <Slider>
                        <SliderTrack />
                        <SliderTick />
                        <SliderThumb />
                    </Slider>
                    <ZoomSign>+</ZoomSign>
                    <ZoomPct>463%</ZoomPct>
                </StatusRight>
            </StatusBar>

            <Popup>
                <PopupHead>
                    <PopupTitleRow>
                        <PopupTitle>符号</PopupTitle>
                        <CloseIcon color="#222" />
                    </PopupTitleRow>
                    <PanelTabs>
                        <PanelTab><PanelGlyph><FaceTab /></PanelGlyph></PanelTab>
                        <PanelTab><PanelGlyph $size={20}>:-)</PanelGlyph></PanelTab>
                        <PanelTab $active><PanelGlyph $size={28}>Ω</PanelGlyph></PanelTab>
                    </PanelTabs>
                </PopupHead>
                <SymbolGrid>
                    {symbols.map((s, i) =>
                        i === 1 ? (
                            <SymbolCell key={i} $hl><TinyTm>TM</TinyTm></SymbolCell>
                        ) : (
                            <SymbolCell key={i} $size={sizeFor(s)} $thin={thinSet.includes(s)} $bold={s === 'TEL'}>{s}</SymbolCell>
                        )
                    )}
                </SymbolGrid>
                <BottomTabs>
                    <PanelTab><PanelGlyph><ClockIcon /></PanelGlyph></PanelTab>
                    <PanelTab><PanelGlyph>℃</PanelGlyph></PanelTab>
                    <PanelTab><PanelGlyph><OneIcon /></PanelGlyph></PanelTab>
                    <PanelTab $active><PanelGlyph $size={24}>@</PanelGlyph></PanelTab>
                    <PanelTab><PanelGlyph>?!</PanelGlyph></PanelTab>
                    <PanelTab><PanelGlyph>±</PanelGlyph></PanelTab>
                    <PanelTab><PanelGlyph><TriangleIcon /></PanelGlyph></PanelTab>
                    <PanelTab><PanelGlyph>α</PanelGlyph></PanelTab>
                </BottomTabs>
                <ListScroll />
                <RedFrame />
                <KeyTip><TinyTm>TM</TinyTm></KeyTip>
            </Popup>

            <ImeBar>
                <Grip />
                <ImeChar>中</ImeChar>
                <ImeIcon><MoonIcon /></ImeIcon>
                <ImeIcon><Settings size={25} strokeWidth={1.1} color="#111" /></ImeIcon>
            </ImeBar>

            <Watermark>
                <MarkRow>
                    <MarkBai>Bai</MarkBai>
                    <svg width="105" height="112" viewBox="0 0 105 112" fill="#fff" stroke="#dfdfdf" strokeWidth="1.4">
                        <ellipse cx="39" cy="20" rx="13" ry="18" />
                        <ellipse cx="70" cy="21" rx="13" ry="17" />
                        <ellipse cx="15" cy="44" rx="14" ry="18" transform="rotate(-20 15 44)" />
                        <ellipse cx="89" cy="51" rx="13" ry="17" transform="rotate(-20 89 51)" />
                        <path d="M51 46 C62 46 68 58 78 66 C92 78 100 96 84 106 C72 112 62 106 51 106 C40 106 30 112 18 106 C4 96 12 78 26 68 C36 60 40 46 51 46 Z" />
                        <text x="52" y="94" textAnchor="middle" fontFamily="Liberation Sans" fontSize="46">du</text>
                    </svg>
                    <MarkCn>经验</MarkCn>
                </MarkRow>
                <MarkUrl>jingyan.baidu.com</MarkUrl>
            </Watermark>
        </Window>
    );
};

export default App;
